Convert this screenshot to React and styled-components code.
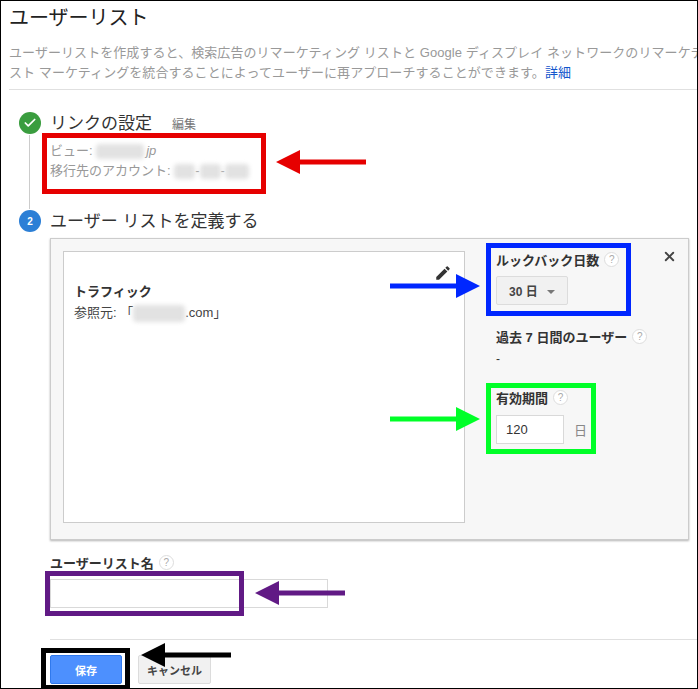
import styled, { createGlobalStyle } from "styled-components";
import { Check, X } from "lucide-react";

const GlobalStyle = createGlobalStyle`
  html, body {
    margin: 0;
    padding: 0;
    background: white;
  }
  * {
    box-sizing: border-box;
  }
`;

const Page = styled.div`
  position: relative;
  width: 698px;
  height: 689px;
  overflow: hidden;
  background: white;
  border: 1px solid black;
  color: #333;
  font-family: "Liberation Sans", "Noto Sans CJK JP", sans-serif;
  font-size: 13px;
`;

const Header = styled.header`
  margin-left: 8px;
  padding-top: 4px;
  height: 89px;
  border-bottom: 1px solid #e0e0e0;
`;

const Title = styled.h1`
  margin: 0;
  font-size: 20px;
  font-weight: 400;
  line-height: 26px;
  color: #222;
`;

const Intro = styled.p`
  margin: 12px 0 0;
  white-space: nowrap;
  font-size: 13px;
  line-height: 20px;
  letter-spacing: 0.07px;
  color: #999;

  a {
    color: #15c;
    text-decoration: none;
  }
`;

const Body = styled.div`
  padding: 21px 0 0 18px;
`;

const StepHead = styled.div`
  display: flex;
  align-items: center;
  height: 24px;
`;

const StepBadge = styled.span`
  display: flex;
  align-items: center;
  justify-content: center;
  flex: none;
  width: 22px;
  height: 22px;
  margin-right: 9px;
  border-radius: 50%;
  background: ${({ $done }) => ($done ? "#3a9d3f" : "#2c7fd6")};
  color: white;
  font-size: 10px;
  font-weight: 700;
`;

const StepTitle = styled.h2`
  margin: 0 0 4px;
  font-size: 17px;
  font-weight: 400;
  color: #333;
`;

const EditLink = styled.span`
  margin: 0 0 0 20px;
  font-size: 12px;
  color: #777;
`;

const StepDetails = styled.div`
  height: 74px;
  margin-left: 10px;
  padding: 6px 0 0 20px;
  border-left: 1px solid #ccc;
  color: #999;
  line-height: 20px;

  em {
    margin-left: 2px;
    font-style: italic;
  }
`;

const Blur = styled.span`
  display: inline-block;
  width: ${({ $w }) => $w}px;
  height: ${({ $h }) => $h || 15}px;
  vertical-align: middle;
  background: #e2e2e2;
  border-radius: 4px;
  filter: blur(2px);
`;

const Panel = styled.section`
  display: flex;
  width: 639px;
  height: 302px;
  margin: 5px 0 0 31px;
  padding-left: 12px;
  position: relative;
  background: #f7f7f7;
  border: 1px solid #ccc;
  box-shadow: 0 1px 2px rgba(0, 0, 0, 0.3);
`;

const RuleBox = styled.div`
  position: relative;
  width: 402px;
  height: 272px;
  margin-top: 12px;
  padding-top: 31px;
  padding-left: 10px;
  background: white;
  border: 1px solid #ccc;
`;

const RuleName = styled.div`
  font-size: 13px;
  font-weight: 700;
  line-height: 18px;
  color: #333;
`;

const RuleValue = styled.div`
  margin-top: 3px;
  font-size: 13px;
  line-height: 18px;
  color: #444;
`;

const EditIcon = styled.svg`
  position: absolute;
  top: 12px;
  right: 12px;
  width: 18px;
  height: 18px;
  fill: #333;
`;

const Side = styled.div`
  display: flex;
  flex-direction: column;
  padding: 11px 0 0 31px;
`;

const Field = styled.div`
  margin-bottom: ${({ $gap }) => $gap || 0}px;
`;

const Label = styled.div`
  display: flex;
  align-items: center;
  gap: 5px;
  height: 18px;
  font-size: 13px;
  font-weight: 700;
  color: #333;
  white-space: nowrap;
`;

const Help = styled.span`
  display: flex;
  align-items: center;
  justify-content: center;
  width: 15px;
  height: 15px;
  border: 1px solid #ddd;
  border-radius: 50%;
  background: white;
  color: #aaa;
  font-size: 10px;
  font-weight: 400;
`;

const SelectButton = styled.div`
  display: flex;
  align-items: center;
  width: 72px;
  height: 29px;
  margin-top: 8px;
  padding-left: 12px;
  background: #f1f1f1;
  border: 1px solid #dcdcdc;
  border-radius: 2px;
  font-size: 12px;
  font-weight: 700;
  color: #444;
`;

const Caret = styled.span`
  margin-left: 9px;
  margin-top: 3px;
  border-left: 4px solid transparent;
  border-right: 4px solid transparent;
  border-top: 4px solid #777;
`;

const Dash = styled.div`
  margin-top: 5px;
  font-size: 12px;
  line-height: 18px;
`;

const InputRow = styled.div`
  display: flex;
  align-items: center;
  gap: 10px;
  margin-top: 9px;
  color: #888;
`;

const Input = styled.div`
  width: ${({ $w }) => $w}px;
  height: ${({ $h }) => $h}px;
  padding-left: 9px;
  background: white;
  border: 1px solid #d9d9d9;
  font-size: 13px;
  line-height: 27px;
  color: #333;
`;

const CloseButton = styled.span`
  position: absolute;
  top: 10px;
  right: 11px;
  display: flex;
  color: #444;
`;

const NameField = styled.div`
  margin: 13px 0 0 31px;

  ${Input} {
    margin-top: 8px;
  }
`;

const Footer = styled.footer`
  display: flex;
  gap: 16px;
  margin: 31px 0 0 31px;
  padding-top: 15px;
  border-top: 1px solid #e0e0e0;
`;

const Button = styled.button`
  width: ${({ $w }) => $w}px;
  height: 29px;
  padding: 0;
  background: ${({ $primary }) => ($primary ? "#4d90fe" : "#f1f1f1")};
  border: 1px solid ${({ $primary }) => ($primary ? "#3079ed" : "#dcdcdc")};
  border-radius: 2px;
  color: ${({ $primary }) => ($primary ? "white" : "#444")};
  font-family: inherit;
  font-size: 11px;
  font-weight: 700;
`;

// annotations drawn on top of the screenshot
const Frame = styled.div`
  position: absolute;
  left: ${({ $x }) => $x}px;
  top: ${({ $y }) => $y}px;
  width: ${({ $w }) => $w}px;
  height: ${({ $h }) => $h}px;
  border: 5px solid ${({ $color }) => $color};
`;

const ArrowSvg = styled.svg`
  position: absolute;
  left: ${({ $x }) => $x}px;
  top: ${({ $y }) => $y}px;
  fill: ${({ $color }) => $color};
`;

function Arrow({ x, y, color, left }) {
  // x,y = left end and middle of the arrow, 90 long
  return (
    <ArrowSvg $x={x} $y={y - 13} $color={color} width="90" height="26">
      {left ? (
        <path d="M0 13 L24 1 V10.5 H90 V15.5 H24 V25 Z" />
      ) : (
        <path d="M0 10.5 H66 V1 L90 13 L66 25 V15.5 H0 Z" />
      )}
    </ArrowSvg>
  );
}

const frames = [
  { x: 41, y: 132, w: 224, h: 61, color: "#e60000" },
  { x: 485, y: 242, w: 145, h: 73, color: "#0027ff" },
  { x: 485, y: 382, w: 110, h: 71, color: "#00ff28" },
  { x: 44, y: 570, w: 199, h: 45, color: "#611a85" },
  { x: 40, y: 647, w: 89, h: 42, color: "#000" },
];

const arrows = [
  { x: 275, y: 161, color: "#e60000", left: true },
  { x: 389, y: 285, color: "#0027ff" },
  { x: 389, y: 418, color: "#00ff28" },
  { x: 254, y: 592, color: "#611a85", left: true },
  { x: 140, y: 654, color: "#000", left: true },
];

export default function App() {
  return (
    <Page>
      <GlobalStyle />
      <Header>
        <Title>ユーザーリスト</Title>
        <Intro>
          ユーザーリストを作成すると、検索広告のリマーケティング リストと Google ディスプレイ ネットワークのリマーケテ
          <br />
          スト マーケティングを統合することによってユーザーに再アプローチすることができます。<a href="#detail">詳細</a>
        </Intro>
      </Header>
      <Body>
        <StepHead>
          <StepBadge $done>
            <Check size={14} strokeWidth={3} />
          </StepBadge>
          <StepTitle>リンクの設定</StepTitle>
          <EditLink>編集</EditLink>
        </StepHead>
        <StepDetails>
          <div>
            ビュー: <Blur $w={48} />
            <em>jp</em>
          </div>
          <div>
            移行先のアカウント: <Blur $w={21} />-<Blur $w={21} />-<Blur $w={24} />
          </div>
        </StepDetails>
        <StepHead>
          <StepBadge>2</StepBadge>
          <StepTitle>ユーザー リストを定義する</StepTitle>
        </StepHead>
        <Panel>
          <RuleBox>
            <RuleName>トラフィック</RuleName>
            <RuleValue>
              参照元: 「<Blur $w={52} $h={17} />.com」
            </RuleValue>
            <EditIcon viewBox="0 0 24 24">
              <path d="M3 17.25V21h3.75L17.81 9.94l-3.75-3.75L3 17.25zM20.71 7.04a1 1 0 0 0 0-1.41l-2.34-2.34a1 1 0 0 0-1.41 0l-1.83 1.83 3.75 3.75 1.83-1.83z" />
            </EditIcon>
          </RuleBox>
          <Side>
            <Field $gap={22}>
              <Label>
                ルックバック日数 <Help>?</Help>
              </Label>
              <SelectButton>
                30 日<Caret />
              </SelectButton>
            </Field>
            <Field $gap={20}>
              <Label>
                過去 7 日間のユーザー <Help>?</Help>
              </Label>
              <Dash>-</Dash>
            </Field>
            <Field>
              <Label>
                有効期間 <Help>?</Help>
              </Label>
              <InputRow>
                <Input $w={68} $h={29}>
                  120
                </Input>
                日
              </InputRow>
            </Field>
          </Side>
          <CloseButton>
            <X size={15} strokeWidth={3} />
          </CloseButton>
        </Panel>
        <NameField>
          <Label>
            ユーザーリスト名 <Help>?</Help>
          </Label>
          <Input $w={278} $h={29} />
        </NameField>
        <Footer>
          <Button $primary $w={72}>
            保存
          </Button>
          <Button $w={73}>キャンセル</Button>
        </Footer>
      </Body>
      {frames.map((f) => (
        <Frame key={f.color} $x={f.x} $y={f.y} $w={f.w} $h={f.h} $color={f.color} />
      ))}
      {arrows.map((a) => (
        <Arrow key={a.color} {...a} />
      ))}
    </Page>
  );
}
